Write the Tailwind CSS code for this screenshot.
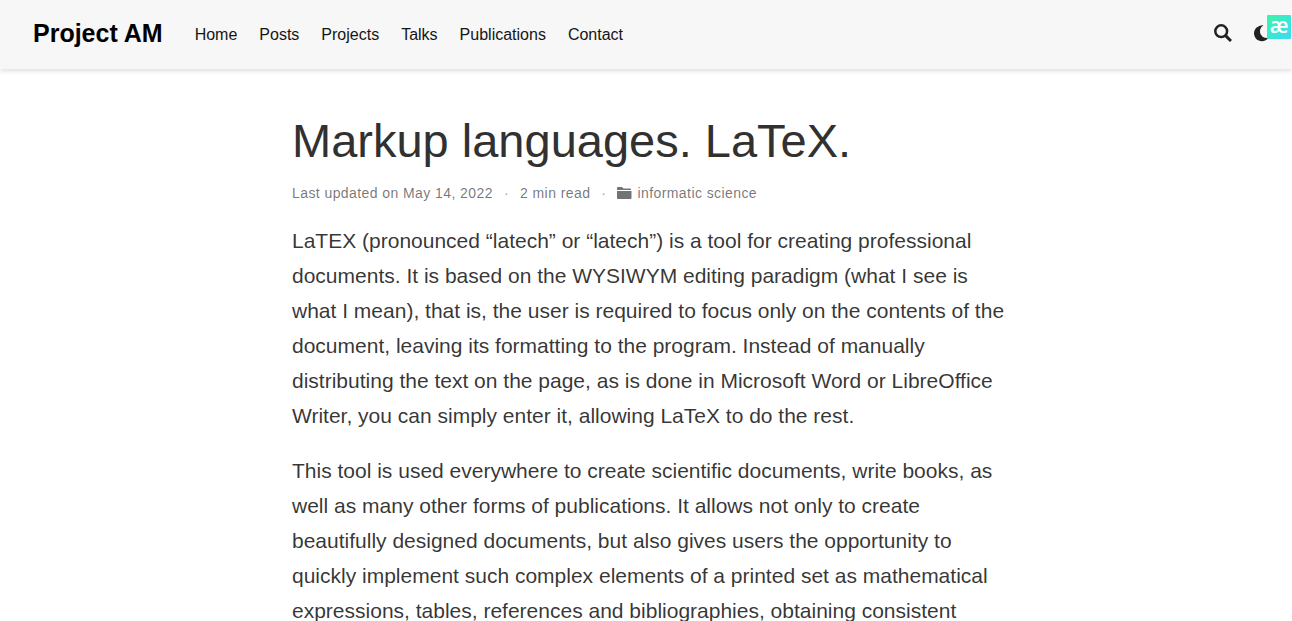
<!DOCTYPE html>
<html lang="en">
<head>
<meta charset="utf-8">
<meta name="viewport" content="width=device-width, initial-scale=1">
<title>Markup languages. LaTeX. | Project AM</title>
<script src="https://cdn.jsdelivr.net/npm/@tailwindcss/browser@4"></script>
</head>
<body class="h-screen overflow-hidden bg-white font-['Liberation_Sans',Arial,sans-serif] text-black/80">
<header class="flex h-[69px] items-center bg-[#f7f7f7] pl-[33px] shadow-[0_2px_5px_rgba(0,0,0,0.13)]">
  <a href="#" class="mr-8 pb-1 text-[25px] leading-8 font-bold text-black">Project AM</a>
  <nav class="flex flex-1 gap-[22px] text-base text-[#151515]">
    <a href="#">Home</a><a href="#">Posts</a><a href="#">Projects</a><a href="#">Talks</a><a href="#">Publications</a><a href="#">Contact</a>
  </nav>
  <button type="button" aria-label="Search" class="mr-[22px] pb-1"><svg class="size-[18px]" viewBox="0 0 18 18" fill="none" stroke="#222"><circle cx="7.200" cy="7.200" r="5.900" stroke-width="2.500"/><path d="M11.600 11.600L17 17" stroke-width="3"/></svg></button>
  <div class="relative w-[38px] pb-1">
    <button type="button" aria-label="Theme" class="block"><svg class="h-[18px] w-4" viewBox="0 0 16 18" fill="#222"><path d="M9.500 1.200C5.800 3.500 5.200 7.800 7 10.800C8.600 13.500 11.500 14.500 14.500 13.800C13 16.200 10.500 17.200 8 17.200C3.500 17.200 0 13.600 0 9.200C0 4.600 4.500.800 9.500 1.200Z"/></svg></button>
    <span class="absolute right-px -top-[9px] flex h-6 w-6 items-center justify-center rounded-[1px] bg-linear-to-br from-[#3df5a5] to-[#40d8f5] pb-1 font-['Open_Sans',sans-serif] text-[21px] leading-5 font-semibold text-white">æ</span>
  </div>
</header>
<main class="mx-auto max-w-[740px] pt-[42px] pr-2 pl-4">
  <h1 class="text-[47px] leading-[60px] text-[#313131]">Markup languages. LaTeX.</h1>
  <div class="mt-3 flex items-center text-sm tracking-[0.03em] text-black/55">
    <span>Last updated on May 14, 2022</span><span class="mx-[11px] text-black/40">·</span><span>2 min read</span><span class="mx-[11px] text-black/40">·</span>
    <svg class="mr-[5px] h-3.5 w-[15px]" viewBox="0 0 15 14" fill="currentColor"><path d="M0 3V2Q0 1 1 1H5L6.500 2.500H13Q14 2.500 14 3.500V4H0ZM0 5H14.500V12Q14.500 13 13.500 13H1Q0 13 0 12Z"/></svg>
    <a href="#">informatic science</a>
  </div>
  <article class="mt-5 space-y-5 text-[21px] leading-[35px]">
    <p>LaTEX (pronounced “latech” or “latech”) is a tool for creating professional documents. It is based on the WYSIWYM editing paradigm (what I see is what I mean), that is, the user is required to focus only on the contents of the document, leaving its formatting to the program. Instead of manually distributing the text on the page, as is done in Microsoft Word or LibreOffice Writer, you can simply enter it, allowing LaTeX to do the rest.</p>
    <p>This tool is used everywhere to create scientific documents, write books, as well as many other forms of publications. It allows not only to create beautifully designed documents, but also gives users the opportunity to quickly implement such complex elements of a printed set as mathematical expressions, tables, references and bibliographies, obtaining consistent</p>
  </article>
</main>
</body>
</html>
